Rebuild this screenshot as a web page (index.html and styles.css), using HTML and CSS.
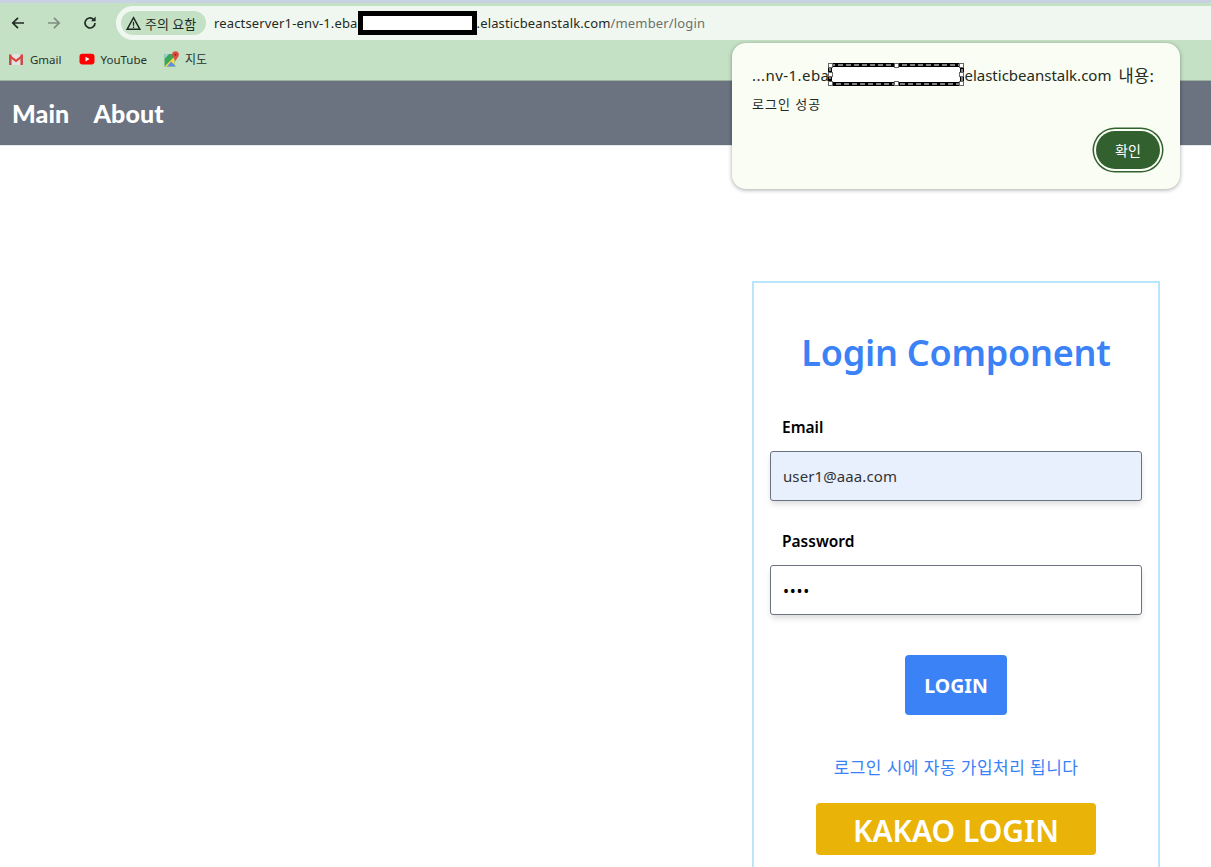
FILE: index.html
```html
<!DOCTYPE html>
<html lang="ko">
<head>
<meta charset="utf-8">
<title>Login</title>
<link rel="stylesheet" href="styles.css">
</head>
<body>
<header class="browser">
  <div class="toolbar">
    <div class="nav-icons">
      <svg class="ico" viewBox="0 0 16 16"><path d="M14 8H3M8 2.8 2.8 8 8 13.2" fill="none" stroke="#1f2a22" stroke-width="1.7"/></svg>
      <svg class="ico" viewBox="0 0 16 16"><path d="M2 8h11M8 2.8 13.2 8 8 13.2" fill="none" stroke="#7f8c82" stroke-width="1.7"/></svg>
      <svg class="ico" viewBox="0 0 16 16"><path d="M13 8a5 5 0 1 1-1.6-3.7" fill="none" stroke="#1f2a22" stroke-width="1.7"/><path d="M13.6 1.6v4.6H9z" fill="#1f2a22"/></svg>
    </div>
    <div class="omnibox">
      <div class="chip">
        <svg class="warn" viewBox="0 0 14 14"><path d="M7 1.6 13 12.4H1z" fill="none" stroke="#1f2a22" stroke-width="1.4"/><path d="M7 5.4v3.6M7 9.8v1.3" stroke="#1f2a22" stroke-width="1.2"/></svg>
        <span>주의 요함</span>
      </div>
      <div class="url">
        <span>reactserver1-env-1.eba</span><span class="redact"></span><span>.elasticbeanstalk.com</span><span class="url-path">/member/login</span>
      </div>
    </div>
  </div>
  <div class="bookmarks">
    <div class="bookmark">
      <svg class="bm-ico" viewBox="0 0 16 16"><path d="M1 3.2h14V14H1z" fill="#e3e3e3"/><path d="M1 3.5h2.6V14H1z" fill="#c5524a"/><path d="M12.4 3.5H15V14h-2.6z" fill="#c5524a"/><path d="M1 3.2 8 8.6l7-5.4v2.8L8 11.2 1 6z" fill="#d9473d"/></svg>
      <span>Gmail</span>
    </div>
    <div class="bookmark">
      <svg class="bm-ico" viewBox="0 0 16 16"><rect x="0.5" y="2.8" width="15" height="10.6" rx="2.8" fill="#f00"/><path d="M6.5 5.7 10.6 8.1 6.5 10.5z" fill="#fff"/></svg>
      <span>YouTube</span>
    </div>
    <div class="bookmark bookmark-tight">
      <svg class="bm-ico" viewBox="0 0 16 16"><path d="M0.5 3h10v12.5H0.5z" fill="#3aa757"/><path d="M0.5 15.5 10.5 5.5v10z" fill="#fbd44b"/><path d="M3 15.5 7 10.5l5 5z" fill="#5b8fe8"/><path d="M0.5 3H5L0.5 8z" fill="#9ccbe0"/><path d="M11.5 0.3a3.4 3.4 0 0 1 3.4 3.4c0 2.3-2.5 3.8-3.4 6.6-.9-2.8-3.4-4.3-3.4-6.6a3.4 3.4 0 0 1 3.4-3.4z" fill="#dd5144"/><circle cx="11.5" cy="3.7" r="1.1" fill="#8f2a22"/></svg>
      <span>지도</span>
    </div>
  </div>
</header>

<nav class="site-nav">
  <a class="site-link">Main</a>
  <a class="site-link">About</a>
</nav>

<main class="page">
  <section class="card">
    <h1 class="card-title">Login Component</h1>
    <div class="field">
      <label class="field-label">Email</label>
      <div class="input input-filled">user1@aaa.com</div>
    </div>
    <div class="field">
      <label class="field-label">Password</label>
      <div class="input input-pass">••••</div>
    </div>
    <div class="login-row"><button class="btn-login">LOGIN</button></div>
    <p class="notice">로그인 시에 자동 가입처리 됩니다</p>
    <div class="kakao-row"><a class="btn-kakao">KAKAO LOGIN</a></div>
  </section>
</main>

<div class="dialog">
  <div class="dialog-origin">
    <span class="origin-start">...nv-1.eba</span>
    <span class="redact-selected">
      <svg class="handles" viewBox="0 0 136 23">
        <rect x="2" y="2" width="132" height="19" fill="none" stroke="#fff" stroke-dasharray="5 3"/>
        <g fill="#fff" stroke="#666">
          <rect x="0.5" y="0.5" width="4" height="4"/><rect x="66.5" y="0.5" width="4" height="4"/><rect x="131.5" y="0.5" width="4" height="4"/>
          <rect x="0.5" y="18.5" width="4" height="4"/><rect x="66.5" y="18.5" width="4" height="4"/><rect x="131.5" y="18.5" width="4" height="4"/>
          <rect x="0.5" y="9.5" width="4" height="4"/><rect x="131.5" y="9.5" width="4" height="4"/>
        </g>
      </svg>
    </span>
    <span>elasticbeanstalk.com</span>
    <span class="origin-end">내용:</span>
  </div>
  <p class="dialog-msg">로그인 성공</p>
  <div class="dialog-actions"><button class="dialog-ok">확인</button></div>
</div>
</body>
</html>
```

FILE: styles.css
```css
* { box-sizing: border-box; }
html, body { margin: 0; height: 100%; }
body {
  overflow: hidden;
  background: #fff;
  font-family: "Noto Sans", "Noto Sans CJK KR", sans-serif;
  color: #000;
  position: relative;
}
.browser {
  background: #c5e1c5;
  border-top: 3px solid #c8d2e2;
  border-bottom: 1px solid #9bb09f;
  height: 81px;
}
.toolbar {
  display: flex;
  align-items: center;
  height: 34px;
  margin-top: 3px;
  padding-left: 10px;
}
.nav-icons { display: flex; gap: 20px; width: 106px; }
.ico { width: 16px; height: 16px; }
.omnibox {
  flex: 1;
  display: flex;
  align-items: center;
  height: 34px;
  background: #f0f7f0;
  border-radius: 17px 0 0 17px;
  padding-left: 5px;
  font-size: 13px;
  color: #1f2a22;
}
.chip {
  display: flex;
  align-items: center;
  gap: 4px;
  height: 24px;
  width: 85px;
  padding-left: 5px;
  background: #c5e1c5;
  border-radius: 12px;
  font-size: 13px;
  white-space: nowrap;
}
.warn { width: 15px; height: 15px; flex: none; }
.url { display: flex; align-items: center; margin-left: 8px; white-space: nowrap; letter-spacing: .15px; }
.url-path { color: #6a726c; }
.redact {
  width: 119px;
  height: 24px;
  background: #fff;
  border: 5px solid #000;
}
.bookmarks {
  display: flex;
  align-items: center;
  height: 37px;
  padding: 1px 0 0 8px;
  gap: 17px;
  font-size: 11.5px;
  color: #27332a;
}
.bookmark { display: flex; align-items: center; gap: 6px; }
.bookmark-tight { gap: 5px; font-size: 12px; }
.bm-ico { width: 16px; height: 16px; flex: none; }

.site-nav {
  display: flex;
  align-items: center;
  gap: 24px;
  height: 65px;
  padding-left: 12px;
  background: #6b7280;
  border-bottom: 1px solid #e5e7eb;
  color: #fff;
  font-family: Lato, "Noto Sans", sans-serif;
  font-size: 25px;
  font-weight: 900;
  letter-spacing: .1px;
}

.page {
  display: flex;
  justify-content: flex-end;
  padding: 135px 51px 0 0;
}
.card {
  width: 408px;
  height: 640px;
  border: 2px solid #bae6fd;
  padding: 48px 16px 0;
}
.card-title {
  margin: 0 0 40px;
  text-align: center;
  font-size: 36px;
  line-height: 44px;
  font-weight: 600;
  letter-spacing: -.25px;
  color: #3b82f6;
}
.field { margin-bottom: 28px; }
.field-label {
  display: block;
  padding-left: 12px;
  margin-bottom: 12px;
  font-size: 15.5px;
  line-height: 24px;
  font-weight: 600;
}
.input {
  height: 50px;
  line-height: 48px;
  padding-left: 12px;
  border: 1px solid #6b7280;
  border-radius: 3px;
  box-shadow: 0 4px 6px -1px rgba(0,0,0,.15);
  font-size: 15px;
  letter-spacing: .1px;
  color: #333;
}
.input-filled { background: #e8f0fe; }
.input-pass { background: #fff; color: #000; font-size: 16px; letter-spacing: .7px; line-height: 50px; }
.login-row { display: flex; justify-content: center; margin-top: 40px; }
.btn-login {
  width: 102px;
  height: 60px;
  border: 0;
  border-radius: 4px;
  background: #3b82f6;
  color: #fff;
  font: 700 19.5px "Noto Sans", sans-serif;
}
.notice {
  margin: 41px 0 0;
  text-align: center;
  font-size: 17px;
  line-height: 24px;
  letter-spacing: .45px;
  color: #3b82f6;
}
.kakao-row { display: flex; justify-content: center; margin-top: 23px; }
.btn-kakao {
  width: 280px;
  height: 52px;
  line-height: 55px;
  text-align: center;
  border-radius: 4px;
  background: #eab308;
  color: #fff;
  font-size: 30px;
  font-weight: 600;
}

.dialog {
  position: absolute;
  left: 732px;
  top: 43px;
  width: 448px;
  height: 146px;
  padding: 20px 20px 0;
  background: #f9fdf3;
  border-radius: 14px;
  box-shadow: 0 1px 4px rgba(0,0,0,.35);
}
.dialog-origin {
  display: flex;
  align-items: center;
  height: 23px;
  font-size: 15px;
  color: #1f2a22;
  white-space: nowrap;
}
.origin-start { letter-spacing: .45px; }
.origin-end { font-size: 16.5px; margin-left: 7px; letter-spacing: .3px; }
.redact-selected {
  width: 136px;
  height: 23px;
  margin: 0 0 0 -1px;
  background: #fff;
  box-shadow: inset 0 0 0 4px #000;
  flex: none;
}
.handles { display: block; width: 136px; height: 23px; }
.dialog-msg { margin: 9px 0 0; font-size: 13px; line-height: 18px; letter-spacing: 1px; color: #1f2a22; }
.dialog-actions { display: flex; justify-content: flex-end; margin-top: 18px; }
.dialog-ok {
  width: 64px;
  height: 38px;
  border: 0;
  border-radius: 19px;
  background: #32602f;
  color: #fff;
  font: 14px "Noto Sans CJK KR", sans-serif;
  box-shadow: 0 0 0 2px #f9fdf3, 0 0 0 3.5px #32602f;
}
```
